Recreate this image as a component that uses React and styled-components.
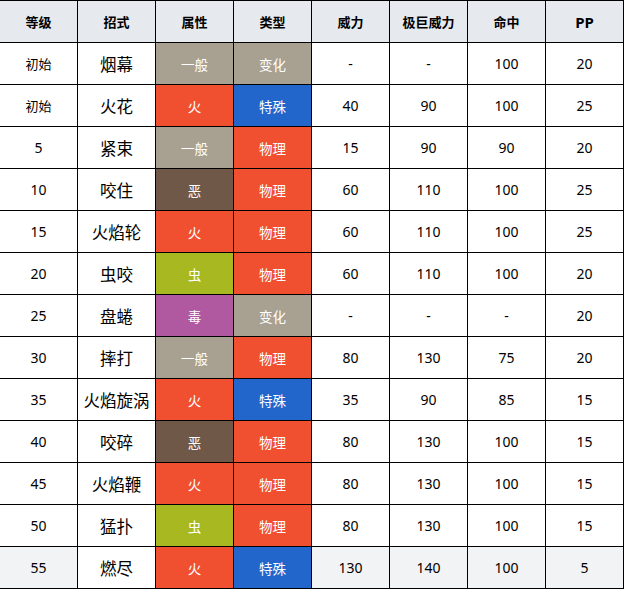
import React from "react";
import styled, { createGlobalStyle } from "styled-components";

const GlobalStyle = createGlobalStyle`
  html, body {
    margin: 0;
    padding: 0;
    background: #ffffff;
  }
  body {
    font-family: "Noto Sans", "Noto Sans CJK SC", sans-serif;
    color: #000;
  }
`;

const typeColors = {
  一般: "#a8a090",
  火: "#f05030",
  特殊: "#2266cc",
  物理: "#f05030",
  变化: "#a8a090",
  恶: "#705848",
  虫: "#a8b820",
  毒: "#b058a0",
};

const headers = ["等级", "招式", "属性", "类型", "威力", "极巨威力", "命中", "PP"];

const moves = [
  ["初始", "烟幕", "一般", "变化", "-", "-", "100", "20"],
  ["初始", "火花", "火", "特殊", "40", "90", "100", "25"],
  ["5", "紧束", "一般", "物理", "15", "90", "90", "20"],
  ["10", "咬住", "恶", "物理", "60", "110", "100", "25"],
  ["15", "火焰轮", "火", "物理", "60", "110", "100", "25"],
  ["20", "虫咬", "虫", "物理", "60", "110", "100", "20"],
  ["25", "盘蜷", "毒", "变化", "-", "-", "-", "20"],
  ["30", "摔打", "一般", "物理", "80", "130", "75", "20"],
  ["35", "火焰旋涡", "火", "特殊", "35", "90", "85", "15"],
  ["40", "咬碎", "恶", "物理", "80", "130", "100", "15"],
  ["45", "火焰鞭", "火", "物理", "80", "130", "100", "15"],
  ["50", "猛扑", "虫", "物理", "80", "130", "100", "15"],
  ["55", "燃尽", "火", "特殊", "130", "140", "100", "5"],
];

const Table = styled.div`
  display: grid;
  grid-template-columns: repeat(8, 78px);
  width: 624px;
  border-top: 1px solid #000;
`;

const Cell = styled.div`
  height: 41px;
  display: flex;
  align-items: center;
  justify-content: center;
  border-right: 1px solid #000;
  border-bottom: 1px solid #000;
  font-size: 14px;
  background: ${(p) => p.$bg || "#ffffff"};
  white-space: nowrap;
`;

const HeadCell = styled(Cell)`
  background: #e6e9ee;
  font-weight: 700;
  font-size: ${(p) => (p.$latin ? "15px" : "13px")};
`;

const LevelCell = styled(Cell)`
  font-size: ${(p) => (p.$small ? "13px" : "14px")};
`;

const NameCell = styled(Cell)`
  font-size: 16.5px;
  background: #ffffff;
`;

const TypeCell = styled(Cell)`
  color: #ffffff;
  font-size: 13.5px;
`;

export default function App() {
  return (
    <>
      <GlobalStyle />
      <Table>
        {headers.map((h) => (
          <HeadCell key={h} $latin={h === "PP"}>
            {h}
          </HeadCell>
        ))}
        {moves.map((m, i) => {
          const rowBg = i === moves.length - 1 ? "#f2f3f5" : "#ffffff";
          return (
            <React.Fragment key={m[1]}>
              <LevelCell $bg={rowBg} $small={m[0] === "初始"}>
                {m[0]}
              </LevelCell>
              <NameCell>{m[1]}</NameCell>
              <TypeCell $bg={typeColors[m[2]]}>{m[2]}</TypeCell>
              <TypeCell $bg={typeColors[m[3]]}>{m[3]}</TypeCell>
              <Cell $bg={rowBg}>{m[4]}</Cell>
              <Cell $bg={rowBg}>{m[5]}</Cell>
              <Cell $bg={rowBg}>{m[6]}</Cell>
              <Cell $bg={rowBg}>{m[7]}</Cell>
            </React.Fragment>
          );
        })}
      </Table>
    </>
  );
}
